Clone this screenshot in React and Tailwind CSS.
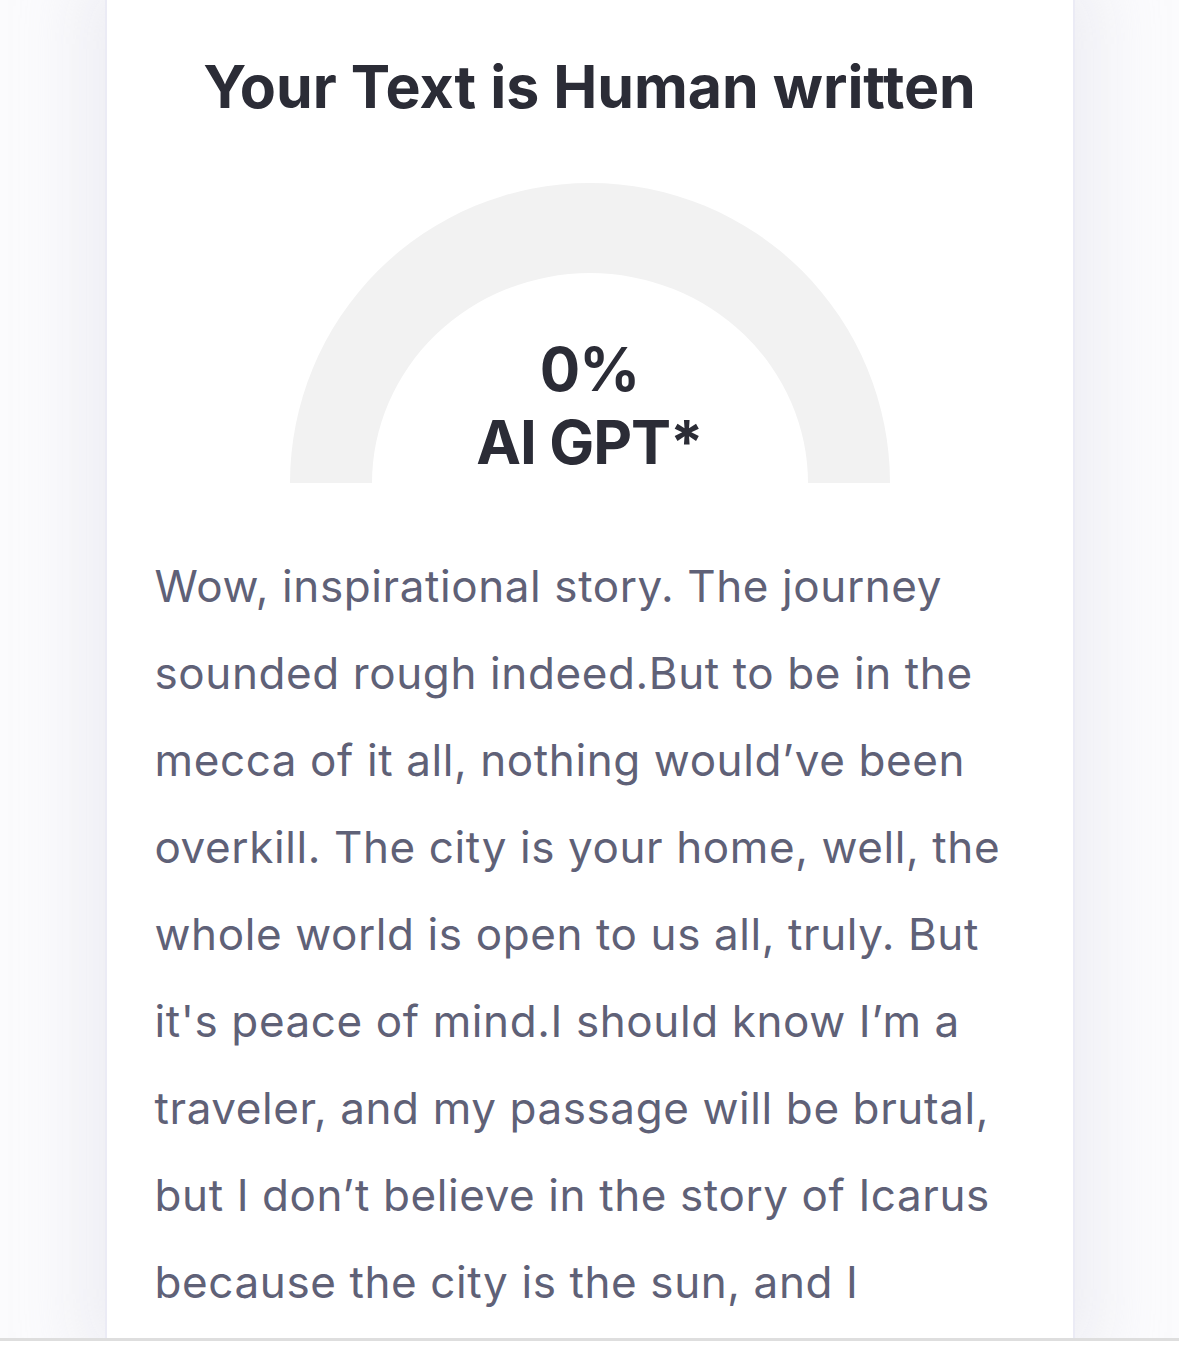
import React from 'react';

// Half-ring gauge behind the score
const Gauge = () => (
  <svg width="602" height="300" viewBox="0 0 602 300" className="block">
    <path
      d="M1 300 A300 300 0 0 1 601 300 L519 300 A218 210 0 0 0 83 300 Z"
      fill="#f2f2f2"
    />
  </svg>
);

const paragraph =
  "Wow, inspirational story. The journey sounded rough indeed.But to be in the mecca of it all, nothing would\u2019ve been overkill. The city is your home, well, the whole world is open to us all, truly. But it's peace of mind.I should know I\u2019m a traveler, and my passage will be brutal, but I don\u2019t believe in the story of Icarus because the city is the sun, and I";

export default function App() {
  return (
    <div
      className="w-[1179px] h-[1346px] overflow-hidden bg-white flex flex-col"
      style={{ fontFamily: 'Inter, "Noto Sans", sans-serif' }}
    >
      <div className="h-[1338px] bg-[#fbfbfd] flex justify-center">
        <div className="w-[970px] h-full bg-white border-x-2 border-[#ebebf5] shadow-[0_0_60px_24px_rgba(232,232,240,0.7)] flex flex-col items-center">
          <h1 className="mt-[52px] text-[59px] leading-[70px] font-bold tracking-[0px] text-[#2b2c36]">
            Your Text is Human written
          </h1>

          <div className="relative mt-[61px]">
            <Gauge />
            <div className="absolute inset-x-0 top-[150px] flex flex-col items-center text-[#2b2c36] font-bold text-[60px] leading-[73px] tracking-[-1px]">
              <span>0%</span>
              <span>AI GPT*</span>
            </div>
          </div>

          <p className="self-start ml-[48px] mr-[36px] mt-[60px] text-[44px] leading-[87px] tracking-[0.6px] text-[#5f6177]">
            {paragraph}
          </p>
        </div>
      </div>
      <div className="h-[3px] bg-[#dedede]" />
      <div className="flex-1 bg-white" />
    </div>
  );
}
